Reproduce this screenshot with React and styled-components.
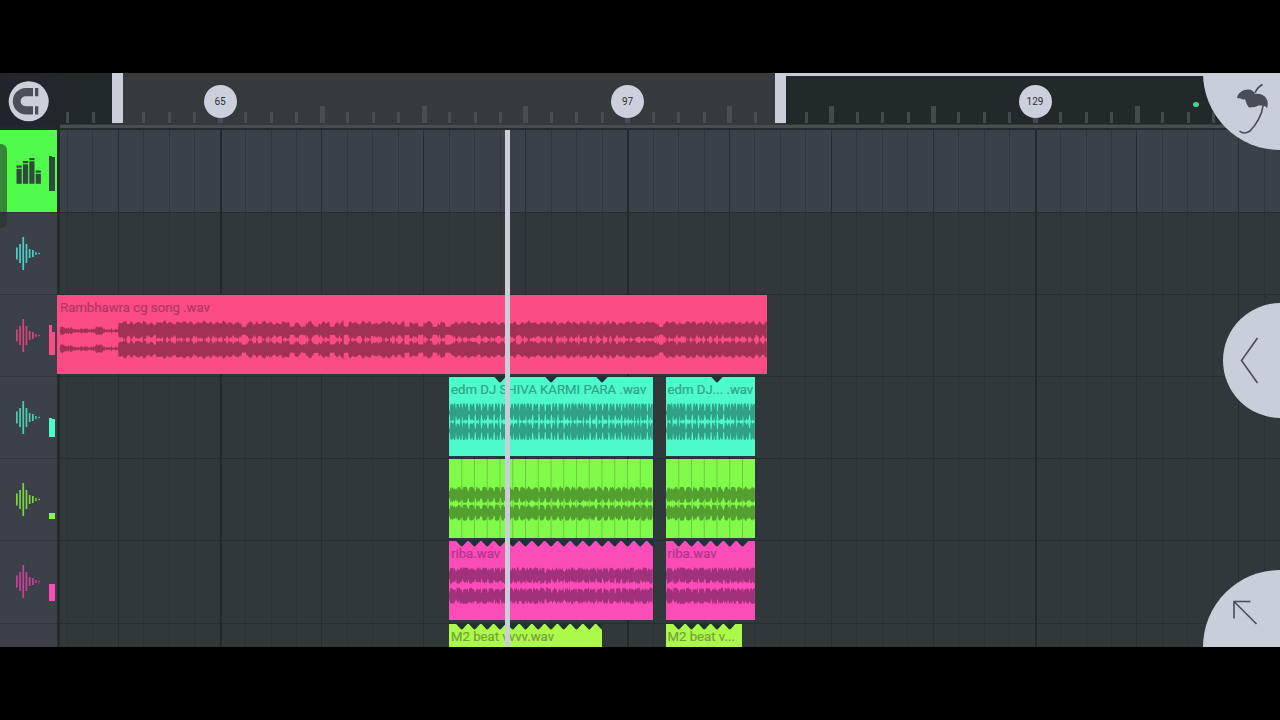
import React from 'react'
import styled, { createGlobalStyle } from 'styled-components'

const BEAT = 25.47
const LANE = 82.1

const GlobalStyle = createGlobalStyle`
  * {
    box-sizing: border-box;
  }
  body {
    margin: 0;
    background: #000;
    font-family: Roboto, "Liberation Sans", sans-serif;
  }
`
const Screen = styled.main`
  width: 1280px;
  height: 720px;
  padding: 73px 0;
  background: #000;
  overflow: hidden;
`
const Playlist = styled.section`
  position: relative;
  display: flex;
  flex-direction: column;
  height: 574px;
  overflow: hidden;
  background: #22282d;
`
const Ruler = styled.header`
  display: grid;
  flex: none;
  width: 1280px;
  height: 51px;
  background: #22282d;

  > * {
    grid-area: 1 / 1;
  }
`
const Range = styled.div`
  display: grid;
  grid-template-columns: 112px 673.5px 1fr;
`
const Outside = styled.div`
  background: #21292b;
  border-top: ${p => p.$edge ? '3px solid #c5cad3' : '0'};

  &:first-child {
    background: linear-gradient(90deg, #20252c, #21292b);
  }
`
const Selected = styled.div`
  display: flex;
  justify-content: space-between;
  background: #343a3d;
  border-bottom: 1px solid #22282c;
`
const Handle = styled.div`
  width: 11px;
  height: 50px;
  background: #c9cedb;
`
const Ticks = styled.div`
  display: flex;
  align-items: flex-end;
  height: 50px;
  margin-left: 54.8px;
`
const TickCell = styled.div`
  display: flex;
  flex: none;
  justify-content: center;
  align-items: flex-end;
  width: ${BEAT}px;
  height: 50px;
`
const Tick = styled.div`
  width: ${p => p.$major ? 5 : 3}px;
  height: ${p => p.$major ? 17.5 : 11.5}px;
  background: ${p => p.$lit ? '#484f52' : '#434a4d'};
`
const Numbers = styled.div`
  display: flex;
  gap: 374.5px;
  padding: 12px 0 0 203.5px;
`
const Number = styled.div`
  flex: none;
  width: 33px;
  height: 33px;
  border-radius: 50%;
  background: #cbd0dc;
  color: #2b3035;
  font-size: 10px;
  line-height: 33px;
  text-align: center;
`
const MagnetSlot = styled.div`
  padding: 8px 0 0 8px;
`
const ScrollBar = styled.div`
  flex: none;
  height: 6px;
  margin-left: 60px;
  border-top: 1px solid #32383b;
  border-bottom: 2px solid #252c30;
  background: #474d50;
`
const Body = styled.div`
  display: grid;
  grid-template-columns: 57px 1fr;
  height: 517px;
`
const Tracks = styled.aside`
  display: grid;
  grid-auto-rows: ${LANE}px;
  background: #3c4149;
`
const Track = styled.div`
  display: flex;
  justify-content: space-between;
  padding: 0 2px 0 15px;
  background: ${p => p.$active ? '#50fb4c' : 'transparent'};

  & + & {
    border-top: 1px solid #2d333a;
  }
`
const TrackIcon = styled.svg`
  width: 28px;
  height: 81px;
`
const Meter = styled.div`
  display: flex;
  align-items: flex-end;
  height: ${p => p.$bottom}px;
`
const Level = styled.div`
  width: 3px;
  height: ${p => p.$h}px;
  background: ${p => p.$color};
`
const Canvas = styled.div`
  display: grid;
  min-width: 0;

  > * {
    grid-area: 1 / 1;
  }
`
const Lanes = styled.div`
  display: grid;
  grid-auto-rows: ${LANE}px;
`
const Lane = styled.div`
  background: ${p => p.$active ? '#3b4148' : '#31383b'};

  & + & {
    border-top: 1px solid #272e31;
  }
`
const GridLines = styled.div`
  display: flex;
  overflow: hidden;
  border-left: 3px solid #242b2f;
`
const GridCell = styled.div`
  flex: none;
  width: ${BEAT}px;
  border-left: ${p => p.$bar ? 2 : 1}px solid ${p => p.$bar ? '#21292c' : p.$phrase ? '#272e32' : 'rgba(36, 43, 48, .5)'};

  &:first-child {
    margin-left: 6.8px;
  }
`
const ClipRow = styled.div`
  display: flex;
  padding-top: 1px;
`
const Clip = styled.article`
  position: relative;
  flex: none;
  width: ${p => p.$width}px;
  height: 78.5px;
  margin-left: ${p => p.$gap}px;
  background: ${p => p.$color};
  overflow: hidden;
`
const ClipArt = styled.svg`
  display: block;
  position: absolute;
  top: 0;
  left: 0;
  width: 100%;
  height: 79px;
`
const ClipName = styled.div`
  position: relative;
  padding: 4px 0 0 ${p => p.$indent || 2}px;
  color: ${p => p.$color};
  font-size: 13.2px;
  font-weight: 400;
  line-height: 17px;
  letter-spacing: 0;
  -webkit-text-stroke: 0.2px ${p => p.$color};
  white-space: nowrap;
`
const Playhead = styled.div`
  position: absolute;
  top: 57px;
  left: 504.5px;
  width: 5.5px;
  height: 517px;
  background: #c9ced8;
`
const Drawer = styled.div`
  position: absolute;
  top: 71px;
  left: 0;
  width: 7px;
  height: 84px;
  border-radius: 0 6px 6px 0;
  background: rgba(34, 52, 42, .58);
`
const Led = styled.div`
  position: absolute;
  top: 29px;
  left: 1193px;
  width: 6px;
  height: 5px;
  border-radius: 50%;
  background: #48d68a;
`
const Knob = styled.button`
  position: absolute;
  top: ${p => p.$y - p.$r}px;
  right: -${p => p.$r}px;
  width: ${p => p.$r * 2}px;
  height: ${p => p.$r * 2}px;
  padding: 0;
  border: 0;
  border-radius: 50%;
  background: #c9cedb;
`
const KnobIcon = styled.svg`
  display: block;
  width: 100%;
  height: 100%;
  fill: none;
  stroke: #484d58;
  stroke-width: 1.6;
`

// small deterministic noise so that the waves don't change between renders
const noise = n => {
  const v = Math.sin(n * 127.1 + 11.7) * 43758.5453
  return v - Math.floor(v)
}

const dips = [187, 235, 246, 259, 275, 289, 350, 364, 378, 391, 604]

const amps = {
  song: (x, inner) => {
    if (x < 3) return 0
    if (x < 61) {
      if (x < 12) return 3 + noise(x) * 2 - x * 0.1
      if (x > 39 && x < 46) return 2.5 + noise(x) * 3.5
      return 0.8 + noise(x) * noise(x + 5) * 4
    }
    const dip = x > 180 && dips.some(d => Math.abs(d - x) < 2.6)
    if (dip) return 3.6 + noise(x)
    const swell = Math.sin(x * 0.95) * 1.1 + Math.sin(x * 0.31) * 0.6
    return (inner ? 5 : 6.8) + swell + noise(x) * (inner ? 3.8 : 2.3)
  },
  edm: (x, inner) => {
    const beat = x % 6.375
    if (beat < 1.2) return 0.8 + noise(x) * 2
    if (beat > 3.5 && beat < 4.3) return 4 + noise(x) * 3
    return 8.6 + noise(x) - (inner ? noise(x + 3) * 2.4 : 0)
  },
  beat: x => {
    const beat = x % 6.375
    if (beat < 1.1) return 2.6 + noise(x) * 2
    return 5.2 + Math.sin(beat / 6.375 * Math.PI) * 2.5 + noise(x) * 0.8 - (noise(x + 9) > 0.8 ? 2 : 0)
  },
  vocal: (x, inner) => {
    const spike = x % 6.375 < 1.1 ? 3.4 : 0
    if (inner) return 7.4 - spike - noise(x) * 3.2
    return 8.3 - spike * 0.7 + noise(x) * 1.2 - (noise(x + 7) > 0.7 ? 2.4 : 0)
  },
}

// two mirrored channels, the inner edges are the ones that face each other
const wavePath = (kind, width, center, upper) => {
  const amp = amps[kind]
  const top = []
  const bottom = []
  for (let x = 0; x <= width; x += 0.7) {
    top.push(`${x.toFixed(1)} ${(center - amp(x, !upper)).toFixed(1)}`)
    bottom.unshift(`${x.toFixed(1)} ${(center + amp(x, upper)).toFixed(1)}`)
  }
  return `M${top.join('L')}L${bottom.join('L')}Z`
}

const range = n => Array.from({ length: n }, (_, i) => i)

const themes = {
  pink: { color: '#fb4c86', ink: '#a23255', name: '#ae3863' },
  aqua: { color: '#4ef9ca', ink: '#30a184', name: '#2fa68b' },
  green: { color: '#80fb49', ink: '#53a031', name: '#53a031' },
  magenta: { color: '#fb4cb8', ink: '#a0317a', name: '#b03689' },
  lime: { color: '#acfa4a', ink: '#70a331', name: '#73a33a' },
}

const rows = [
  [],
  [],
  [{ theme: 'pink', kind: 'song', gap: 0, width: 710.4, name: 'Rambhawra cg song .wav', indent: 3 }],
  [
    { theme: 'aqua', kind: 'edm', gap: 392, width: 204, name: 'edm DJ SHIVA KARMI PARA .wav', step: 51, notches: 3 },
    { theme: 'aqua', kind: 'edm', gap: 12.5, width: 89.5, name: 'edm DJ... .wav', step: 51, notches: 1 },
  ],
  [
    { theme: 'green', kind: 'beat', gap: 392, width: 204, lines: 15 },
    { theme: 'green', kind: 'beat', gap: 12.5, width: 89.5, lines: 6 },
  ],
  [
    { theme: 'magenta', kind: 'vocal', gap: 392, width: 204, name: 'riba.wav', step: 12.75, notches: 16 },
    { theme: 'magenta', kind: 'vocal', gap: 12.5, width: 89.5, name: 'riba.wav', step: 12.75, notches: 6 },
  ],
  [
    { theme: 'lime', gap: 392, width: 153, name: 'M2 beat vvvv.wav', step: 12.75, notches: 12 },
    { theme: 'lime', gap: 63.5, width: 76.5, name: 'M2 beat v...', step: 12.75, notches: 5 },
  ],
]

const tracks = [
  { color: '#4bcfcb' },
  { color: '#d8457a', meter: '#fb4c86', bottom: 59.5, levels: [30, 23] },
  { color: '#4ccfb0', meter: '#4ef9ca', bottom: 59.5, levels: [19, 18] },
  { color: '#79d43f', meter: '#80fb49', bottom: 59.5, levels: [5.5, 5.5] },
  { color: '#c8409a', meter: '#fb4cb8', bottom: 59.5, levels: [17, 16.5] },
]

function AudioClip({ clip }) {
  const { color, ink, name } = themes[clip.theme]
  return (
    <Clip $color={color} $width={clip.width} $gap={clip.gap}>
      <ClipArt>
        {range(clip.lines || 0).map(i => (
          <rect key={i} x={(i + 1) * 12.75 - 0.5} y="0" width="1" height="79" fill={ink} opacity=".5" />
        ))}
        {clip.kind && (
          <g fill={ink}>
            <path d={wavePath(clip.kind, clip.width, 35.8, true)} />
            <path d={wavePath(clip.kind, clip.width, 53.6, false)} />
          </g>
        )}
        {range(clip.notches || 0).map(i => (
          <path key={i} d={`M${(i + 1) * clip.step - 5.6} 0h11.2l-4.6 5q-1 .8-2 0z`} fill="#203231" />
        ))}
      </ClipArt>
      <ClipName $color={name} $indent={clip.indent}>{clip.name}</ClipName>
    </Clip>
  )
}

function WaveIcon({ color }) {
  const bars = [12, 19, 33, 19, 9, 7, 3, 1.5]
  return (
    <TrackIcon viewBox="0 0 28 81">
      {bars.map((h, i) => (
        <rect key={i} x={1 + i * 3.2} y={40.5 - h / 2} width={i > 5 ? 1.4 : 1.7} height={h} fill={color} />
      ))}
    </TrackIcon>
  )
}

function MixerIcon() {
  const tops = [35.5, 31, 28, 40.5]
  return (
    <TrackIcon viewBox="0 0 28 81" fill="#2f4a3c">
      {tops.map((y, i) => (
        <React.Fragment key={y}>
          <rect x={1.5 + i * 6.4} y={y} width="5.2" height="2.2" />
          <rect x={1.5 + i * 6.4} y={y + 3.3} width="5.2" height={50.5 - y} />
        </React.Fragment>
      ))}
    </TrackIcon>
  )
}

function Magnet() {
  return (
    <MagnetSlot>
      <svg width="41" height="41" viewBox="8 81 41 41" fill="#4a4f59">
        <circle cx="28.7" cy="101.3" r="20" fill="#cbd0da" />
        <path d="M33 88H26a13.2 13.2 0 0 0 0 26.4h7v-8.2h-7.4a5 5 0 0 1 0-10H33zM35 88h3.3v8.2H35zM35 106.2h3.3v8.2H35z" />
      </svg>
    </MagnetSlot>
  )
}

function App() {
  return (
    <Screen>
      <GlobalStyle />
      <Playlist>
        <Ruler>
          <Range>
            <Outside />
            <Selected>
              <Handle />
              <Handle />
            </Selected>
            <Outside $edge />
          </Range>
          <Ticks>
            {range(46).map(i => (
              <TickCell key={i}>
                {i !== 2 && i !== 28 && <Tick $major={i % 4 === 2} $lit={i > 2 && i < 28} />}
              </TickCell>
            ))}
          </Ticks>
          <Numbers>
            <Number>65</Number>
            <Number>97</Number>
            <Number>129</Number>
          </Numbers>
          <Magnet />
        </Ruler>
        <ScrollBar />

        <Body>
          <Tracks>
            <Track $active>
              <MixerIcon />
              <Meter $bottom={60.5}>
                <Level $h={34.5} $color="#2f4a3c" />
                <Level $h={33.5} $color="#2f4a3c" />
              </Meter>
            </Track>
            {tracks.map((track, i) => (
              <Track key={i}>
                <WaveIcon color={track.color} />
                {track.levels && (
                  <Meter $bottom={track.bottom}>
                    {track.levels.map((h, k) => <Level key={k} $h={h} $color={track.meter} />)}
                  </Meter>
                )}
              </Track>
            ))}
            <Track />
          </Tracks>

          <Canvas>
            <Lanes>
              {rows.map((_, i) => <Lane key={i} $active={i === 0} />)}
            </Lanes>
            <GridLines>
              {range(48).map(i => (
                <GridCell key={i} $bar={i % 16 === 6} $phrase={i % 4 === 2} />
              ))}
            </GridLines>
            <Lanes>
              {rows.map((clips, i) => (
                <ClipRow key={i}>
                  {clips.map((clip, k) => <AudioClip key={k} clip={clip} />)}
                </ClipRow>
              ))}
            </Lanes>
          </Canvas>
        </Body>

        <Playhead />
        <Drawer />
        <Led />

        {/* menu, side panel and tool knobs are cut by the right edge */}
        <Knob $y={0} $r={77} aria-label="Menu">
          <KnobIcon viewBox="1203 -4 154 154">
            <path d="M1262.5 84.5q-5 2.5-7.5 8.5" />
            <path d="M1263 106c-1 9-7 19-13 25q-6 4-10.5 0" />
            <path d="M1237 98c1-6 7-9 12-8.5 3 .5 5 2 6 4.5 6-1 11 2 12.500 7 .5 3 0 5-.5 7.500-1-2-2-2.500-4-2.500-3-1-6 0-8 1l-6 .5c-2-2-3-5-4-8.500-2 1-3 .5-4-.5z" fill="#484d58" stroke="none" />
          </KnobIcon>
        </Knob>
        <Knob $y={287} $r={57.5} aria-label="Open panel">
          <KnobIcon viewBox="1222.5 302.5 115 115">
            <path d="M1257 337.5l-16 22.5 16 22.5" />
          </KnobIcon>
        </Knob>
        <Knob $y={574} $r={77} aria-label="Select">
          <KnobIcon viewBox="1203 570 154 154">
            <path d="M1250.5 601.5h-16.5v17M1234 601.5l22.5 22.5" />
          </KnobIcon>
        </Knob>
      </Playlist>
    </Screen>
  )
}

export default App
